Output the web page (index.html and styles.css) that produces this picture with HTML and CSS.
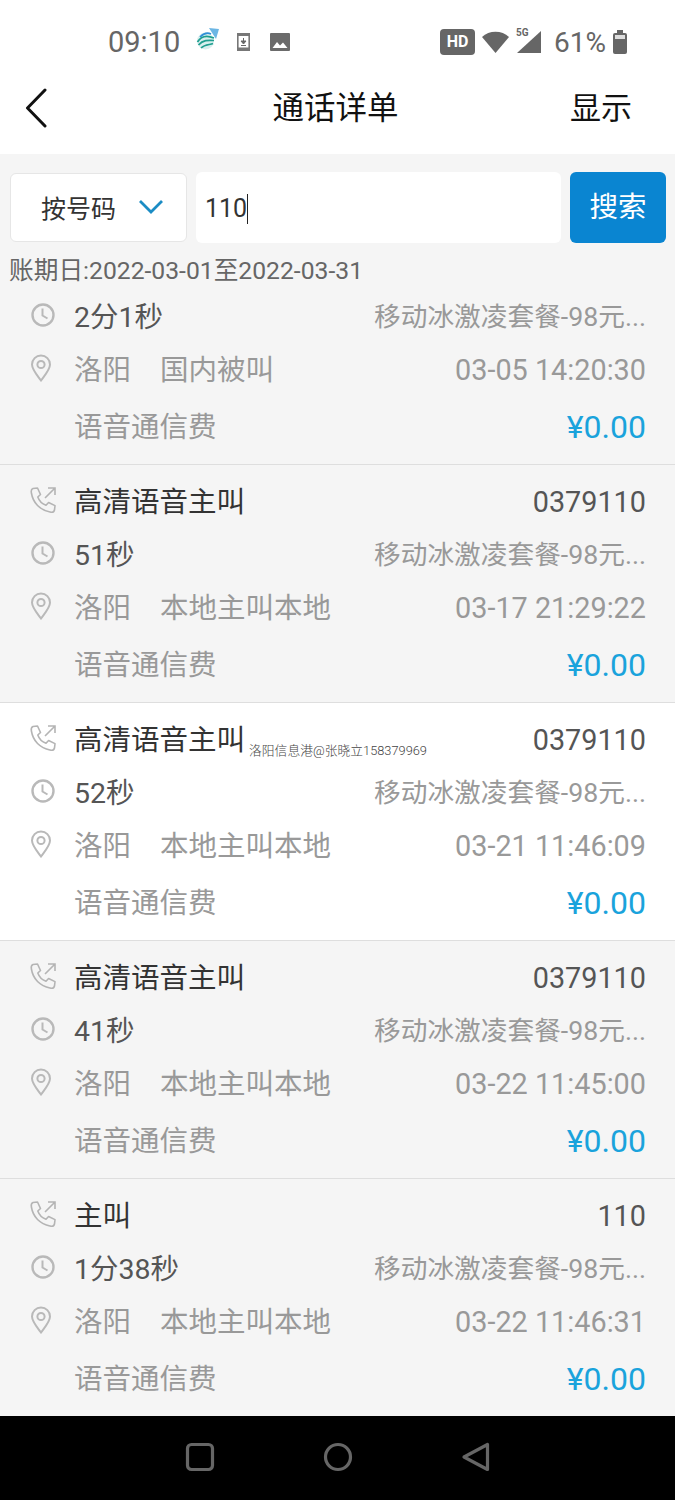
FILE: index.html
```html
<!DOCTYPE html>
<html lang="zh-CN">
<head>
    <meta charset="UTF-8">
    <meta name="viewport" content="width=device-width, initial-scale=1.0">
    <title>通话详单</title>
    <link rel="stylesheet" href="styles.css">
</head>
<body>
    <svg class="icon-defs" width="0" height="0">
        <symbol id="i-phone" viewBox="0 0 28 28">
            <path d="M4 2.5 L8.5 2 L11.5 8.5 L8.8 11 C10 14.5 13.5 18 17 19.3 L19.6 16.5 L26 19.6 L25.5 24 C25 26 23 26.5 21 26 C11 24 4 17 2.4 7 C2 5 2.6 3 4 2.5 Z" fill="none" stroke="#b4b4b4" stroke-width="1.6" stroke-linejoin="round"/>
            <path d="M16 12 L26 2 M19 2 H26 V9" fill="none" stroke="#b4b4b4" stroke-width="1.6"/>
        </symbol>
        <symbol id="i-clock" viewBox="0 0 24 24">
            <circle cx="12" cy="12" r="10.5" fill="none" stroke="#b9b9b9" stroke-width="2.4"/>
            <path d="M11.5 5.5 V12.5 L16.5 15.5" fill="none" stroke="#b9b9b9" stroke-width="2"/>
        </symbol>
        <symbol id="i-pin" viewBox="0 0 22 28">
            <path d="M11 26.5 C7 21 2 15.5 2 10.5 C2 5.5 6 1.5 11 1.5 C16 1.5 20 5.5 20 10.5 C20 15.5 15 21 11 26.5 Z" fill="none" stroke="#b9b9b9" stroke-width="2"/>
            <circle cx="11" cy="10.5" r="3.6" fill="none" stroke="#b9b9b9" stroke-width="2"/>
        </symbol>
    </svg>

    <div class="status-bar">
        <span class="status-time">09:10</span>
        <svg class="st-logo" width="24" height="24" viewBox="0 0 24 24">
            <path d="M13 1 L23 2 L20 12 Z" fill="#6cb6e4"/>
            <circle cx="9.5" cy="14" r="8.5" fill="#d8efee"/>
            <path d="M1.5 15 C5 9 11 8 18 11 M2.5 18 C7 13 12 13 18 13.5 M5 21 C9 17 14 18 17 16.5" fill="none" stroke="#1f9e8f" stroke-width="1.7"/>
            <path d="M4 10 C8 6 12 5.5 15 7" fill="none" stroke="#2f8fd6" stroke-width="1.7"/>
        </svg>
        <svg class="st-download" width="13" height="18" viewBox="0 0 13 18">
            <rect x="0.8" y="0.8" width="11.4" height="16.4" rx="1.5" fill="#fff" stroke="#777" stroke-width="1.6"/>
            <rect x="0" y="0" width="13" height="3" fill="#777"/>
            <rect x="0" y="14.5" width="13" height="3.5" fill="#777"/>
            <path d="M6.5 5 V10 M4 8 L6.5 11 L9 8 Z M4 12.5 H9" fill="#666" stroke="#666"/>
        </svg>
        <svg class="st-image" width="20" height="18" viewBox="0 0 20 18">
            <rect width="20" height="18" rx="1" fill="#6b6b6b"/>
            <path d="M2.5 15 L7 9 L10 12.5 L13 9.5 L17.5 15 Z" fill="#fff"/>
        </svg>
        <span class="status-gap"></span>
        <span class="hd-badge">HD</span>
        <svg class="st-wifi" width="27" height="22" viewBox="0 0 27 22">
            <path d="M0 6 C7 -1 20 -1 27 6 L13.5 22 Z" fill="#666"/>
        </svg>
        <span class="st-signal">
            <span class="st-5g">5G</span>
            <svg width="26" height="24" viewBox="0 0 26 24">
                <path d="M25 1 V23 H1 Z" fill="#666"/>
            </svg>
        </span>
        <span class="status-batt">61%</span>
        <svg width="16" height="24" viewBox="0 0 16 24">
            <rect x="5" y="0" width="6" height="3" fill="#666"/>
            <rect x="1" y="3" width="14" height="21" rx="2" fill="#666"/>
            <rect x="3" y="5" width="10" height="4" fill="#ddd"/>
        </svg>
    </div>

    <div class="nav-bar">
        <svg class="nav-back" width="22" height="40" viewBox="0 0 22 40">
            <path d="M20 2 L2.5 20 L20 38" fill="none" stroke="#111" stroke-width="3" stroke-linecap="round" stroke-linejoin="round"/>
        </svg>
        <div class="nav-title">通话详单</div>
        <div class="nav-action">显示</div>
    </div>

    <div class="search-bar">
        <div class="search-select">
            <span>按号码</span>
            <svg width="26" height="16" viewBox="0 0 26 16">
                <path d="M2 2 L13 13 L24 2" fill="none" stroke="#1b8cc4" stroke-width="2.8"/>
            </svg>
        </div>
        <div class="search-input">110<span class="caret"></span></div>
        <div class="search-btn">搜索</div>
    </div>
    <div class="bill-date">账期日:2022-03-01至2022-03-31</div>

    <div class="call-list">
        <div class="call-row">
            <div class="line">
                <svg class="line-icon" width="24" height="24"><use href="#i-clock"/></svg>
                <span class="text-dark">2分1秒</span>
                <span class="text-right text-light plan">移动冰激凌套餐-98元...</span>
            </div>
            <div class="line">
                <svg class="line-icon pin" width="22" height="28"><use href="#i-pin"/></svg>
                <span class="text-light place">洛阳</span>
                <span class="text-light">国内被叫</span>
                <span class="text-right text-light stamp">03-05 14:20:30</span>
            </div>
            <div class="line line-fee">
                <span class="text-light">语音通信费</span>
                <span class="text-right fee">¥0.00</span>
            </div>
        </div>

        <div class="call-row">
            <div class="line">
                <svg class="line-icon" width="28" height="28"><use href="#i-phone"/></svg>
                <span class="text-title">高清语音主叫</span>
                <span class="text-right text-dark stamp">0379110</span>
            </div>
            <div class="line">
                <svg class="line-icon" width="24" height="24"><use href="#i-clock"/></svg>
                <span class="text-dark">51秒</span>
                <span class="text-right text-light plan">移动冰激凌套餐-98元...</span>
            </div>
            <div class="line">
                <svg class="line-icon pin" width="22" height="28"><use href="#i-pin"/></svg>
                <span class="text-light place">洛阳</span>
                <span class="text-light">本地主叫本地</span>
                <span class="text-right text-light stamp">03-17 21:29:22</span>
            </div>
            <div class="line line-fee">
                <span class="text-light">语音通信费</span>
                <span class="text-right fee">¥0.00</span>
            </div>
        </div>

        <div class="call-row row-white">
            <div class="line">
                <svg class="line-icon" width="28" height="28"><use href="#i-phone"/></svg>
                <span class="text-title">高清语音主叫</span>
                <span class="text-right text-dark stamp">0379110</span>
            </div>
            <div class="line">
                <svg class="line-icon" width="24" height="24"><use href="#i-clock"/></svg>
                <span class="text-dark">52秒</span>
                <span class="text-right text-light plan">移动冰激凌套餐-98元...</span>
            </div>
            <div class="line">
                <svg class="line-icon pin" width="22" height="28"><use href="#i-pin"/></svg>
                <span class="text-light place">洛阳</span>
                <span class="text-light">本地主叫本地</span>
                <span class="text-right text-light stamp">03-21 11:46:09</span>
            </div>
            <div class="line line-fee">
                <span class="text-light">语音通信费</span>
                <span class="text-right fee">¥0.00</span>
            </div>
            <div class="watermark">洛阳信息港@张晓立158379969</div>
        </div>

        <div class="call-row">
            <div class="line">
                <svg class="line-icon" width="28" height="28"><use href="#i-phone"/></svg>
                <span class="text-title">高清语音主叫</span>
                <span class="text-right text-dark stamp">0379110</span>
            </div>
            <div class="line">
                <svg class="line-icon" width="24" height="24"><use href="#i-clock"/></svg>
                <span class="text-dark">41秒</span>
                <span class="text-right text-light plan">移动冰激凌套餐-98元...</span>
            </div>
            <div class="line">
                <svg class="line-icon pin" width="22" height="28"><use href="#i-pin"/></svg>
                <span class="text-light place">洛阳</span>
                <span class="text-light">本地主叫本地</span>
                <span class="text-right text-light stamp">03-22 11:45:00</span>
            </div>
            <div class="line line-fee">
                <span class="text-light">语音通信费</span>
                <span class="text-right fee">¥0.00</span>
            </div>
        </div>

        <div class="call-row">
            <div class="line">
                <svg class="line-icon" width="28" height="28"><use href="#i-phone"/></svg>
                <span class="text-title">主叫</span>
                <span class="text-right text-dark stamp">110</span>
            </div>
            <div class="line">
                <svg class="line-icon" width="24" height="24"><use href="#i-clock"/></svg>
                <span class="text-dark">1分38秒</span>
                <span class="text-right text-light plan">移动冰激凌套餐-98元...</span>
            </div>
            <div class="line">
                <svg class="line-icon pin" width="22" height="28"><use href="#i-pin"/></svg>
                <span class="text-light place">洛阳</span>
                <span class="text-light">本地主叫本地</span>
                <span class="text-right text-light stamp">03-22 11:46:31</span>
            </div>
            <div class="line line-fee">
                <span class="text-light">语音通信费</span>
                <span class="text-right fee">¥0.00</span>
            </div>
        </div>
    </div>

    <div class="sys-nav">
        <svg width="30" height="30" viewBox="0 0 30 30">
            <rect x="2.5" y="2.5" width="25" height="25" rx="4" fill="none" stroke="#666" stroke-width="3.2"/>
        </svg>
        <svg width="30" height="30" viewBox="0 0 30 30">
            <circle cx="15" cy="15" r="12.5" fill="none" stroke="#666" stroke-width="3.2"/>
        </svg>
        <svg width="30" height="30" viewBox="0 0 30 30">
            <path d="M26.5 2.5 V27.5 L3 15 Z" fill="none" stroke="#666" stroke-width="3.2" stroke-linejoin="round"/>
        </svg>
    </div>
</body>
</html>
```

FILE: styles.css
```css
* {
    box-sizing: border-box;
}

body {
    margin: 0;
    width: 675px;
    height: 1500px;
    overflow: hidden;
    background: #f5f5f5;
    font-family: Roboto, "Noto Sans CJK SC", sans-serif;
    color: #555;
}

.icon-defs {
    position: absolute;
}

/* status bar */
.status-bar {
    display: flex;
    align-items: center;
    height: 72px;
    padding: 12px 47px 0 108px;
    background: #fff;
    color: #666;
}

.status-time {
    font-size: 29px;
}

.st-logo {
    margin-left: 16px;
    margin-top: -6px;
}

.st-download {
    margin-left: 17px;
}

.st-image {
    margin-left: 20px;
}

.status-gap {
    flex: 1;
}

.hd-badge {
    width: 35px;
    height: 26px;
    line-height: 26px;
    border-radius: 4px;
    background: #666;
    color: #fff;
    font-size: 16px;
    font-weight: 700;
    text-align: center;
}

.st-wifi {
    margin-left: 7px;
}

.st-signal {
    display: flex;
    position: relative;
    margin-left: 7px;
}

.st-5g {
    position: absolute;
    left: 0;
    top: -3px;
    font-size: 10px;
    font-weight: 700;
}

.status-batt {
    margin-left: 12px;
    margin-right: 6px;
    font-size: 28px;
}

/* title bar */
.nav-bar {
    display: flex;
    align-items: center;
    justify-content: space-between;
    height: 82px;
    padding: 0 43px 16px 25px;
    background: #fff;
    color: #111;
}

.nav-back {
    margin-top: 6px;
}

.nav-title {
    margin-left: 54px;
    font-size: 31.5px;
}

.nav-action {
    font-size: 31px;
}

/* search */
.search-bar {
    display: flex;
    gap: 9px;
    height: 71px;
    margin-top: 18px;
    padding: 0 9px 0 10px;
}

.search-select {
    display: flex;
    align-items: center;
    width: 177px;
    margin: 1px 0;
    padding: 0 0 2px 30px;
    gap: 22px;
    background: #fff;
    border: 1px solid #e6e6e6;
    border-radius: 6px;
    font-size: 25px;
    color: #333;
}

.search-input {
    display: flex;
    align-items: center;
    flex: 1;
    padding: 2px 0 0 9px;
    background: #fff;
    border-radius: 6px;
    font-size: 25px;
    color: #333;
}

.caret {
    width: 1px;
    height: 30px;
    background: #222;
}

.search-btn {
    width: 96px;
    line-height: 71px;
    background: #0a85d1;
    border-radius: 6px;
    color: #fff;
    font-size: 28.5px;
    text-align: center;
}

.bill-date {
    height: 45px;
    padding: 14px 0 0 9px;
    font-size: 24.7px;
    line-height: 28px;
    color: #666;
    white-space: nowrap;
}

/* list */
.call-row {
    position: relative;
    height: 238px;
    padding: 8px 29px 0 29px;
    border-bottom: 1px solid #dedede;
    background: #f5f5f5;
}

.call-row:first-child {
    height: 177px;
    padding-top: 0;
}

.call-row:last-child {
    height: 237px;
    border-bottom: none;
}

.row-white {
    background: #fff;
}

.line {
    display: flex;
    align-items: center;
    height: 53px;
    font-size: 28.5px;
    white-space: nowrap;
}

.line-fee {
    margin-top: 4px;
    padding-left: 45px;
}

.line-icon {
    flex: none;
    width: 28px;
    margin-right: 17px;
}

.line-icon.pin {
    margin-left: 1px;
    margin-right: 22px;
    width: 22px;
}

.text-title {
    color: #333;
}

.text-dark {
    color: #555;
}

.text-light {
    color: #999;
}

.text-right {
    margin-left: auto;
}

.plan {
    font-size: 26.7px;
}

.stamp {
    padding-top: 4px;
    font-size: 28.8px;
}

.place {
    margin-right: 29px;
}

.fee {
    padding-top: 4px;
    font-size: 32px;
    color: #1aa3dc;
}

.watermark {
    position: absolute;
    left: 249px;
    top: 37px;
    font-size: 12.8px;
    font-weight: 300;
    color: #444;
}

/* android nav */
.sys-nav {
    display: flex;
    align-items: center;
    justify-content: center;
    gap: 108px;
    height: 84px;
    padding-bottom: 2px;
    background: #000;
}
```
